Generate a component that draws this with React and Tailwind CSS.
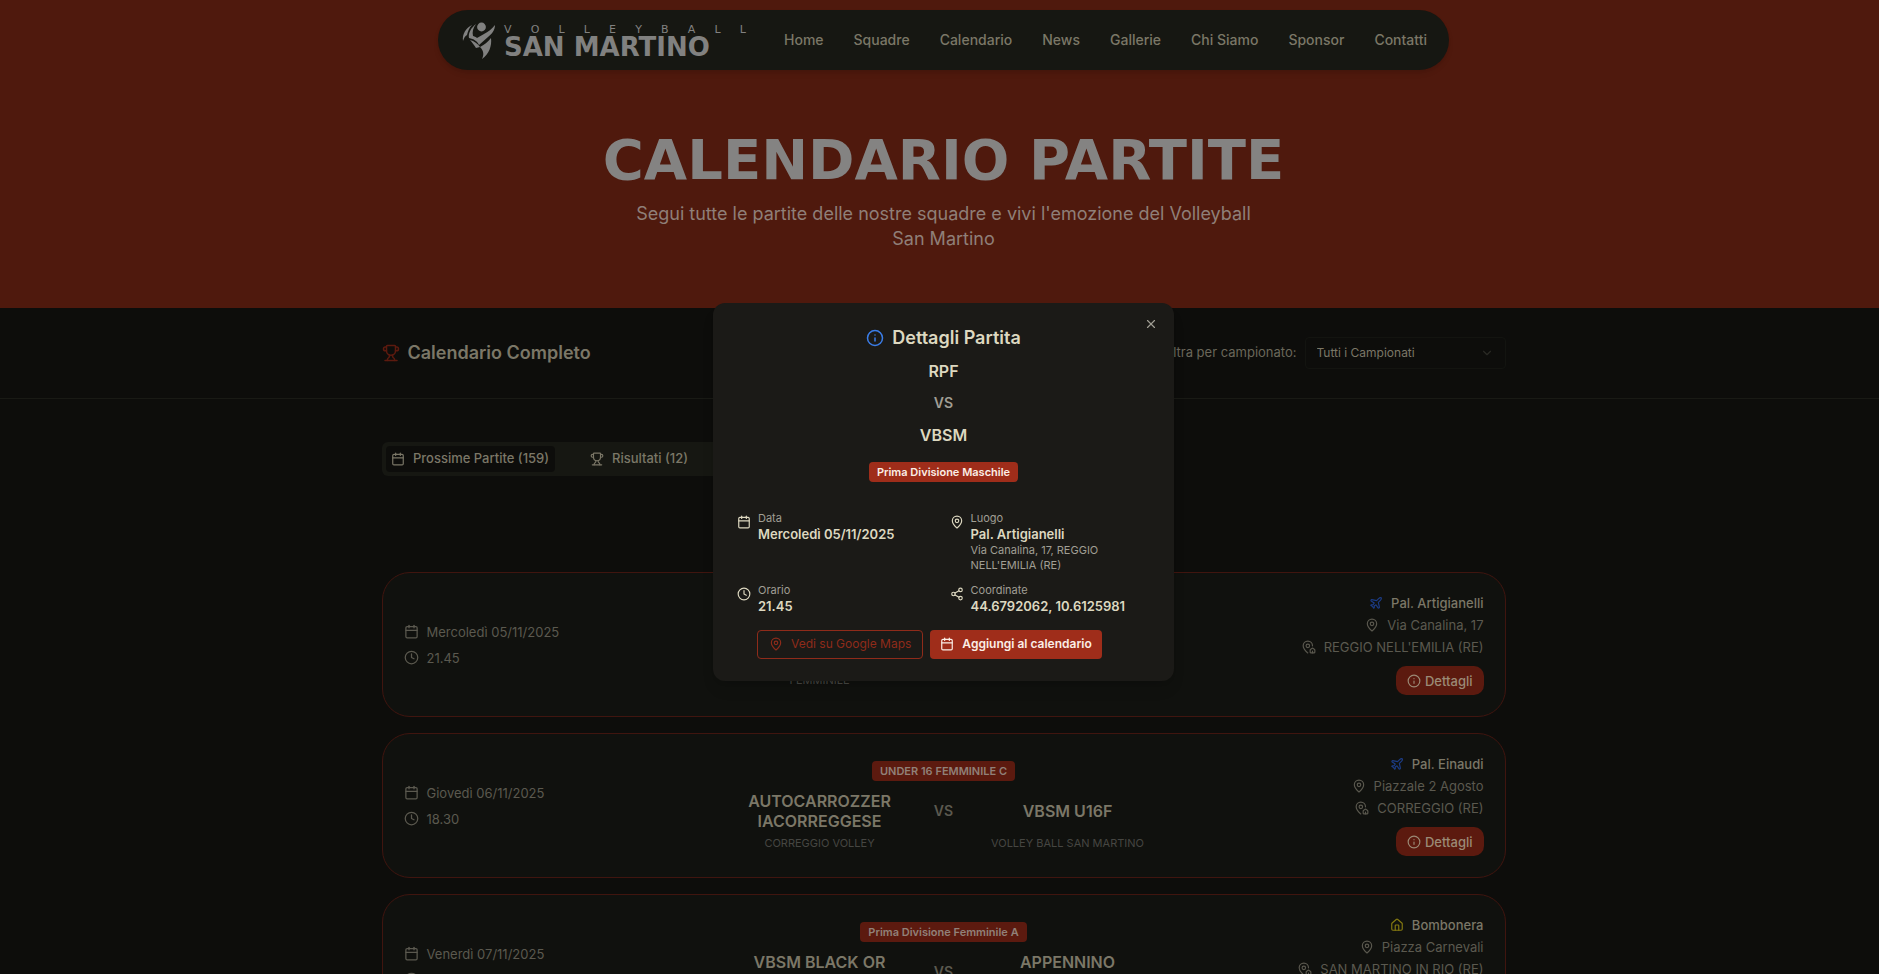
import { useState } from 'react';
import {
  Calendar, ChevronDown, Clock, House, Info,
  MapPin, MapPinHouse, Plane, Share2, Trophy, X
} from 'lucide-react';

const navLinks = ['Home', 'Squadre', 'Calendario', 'News', 'Gallerie', 'Chi Siamo', 'Sponsor', 'Contatti'];

const matches = [
  {
    id: 1,
    date: 'Mercoledì 05/11/2025',
    time: '21.45',
    league: 'Prima Divisione Maschile',
    home: { name: 'RPF', club: 'REGGIO PALLAVOLO FEMMINILE' },
    away: { name: 'VBSM', club: 'VOLLEY BALL SAN MARTINO' },
    venue: 'Pal. Artigianelli',
    street: 'Via Canalina, 17',
    city: "REGGIO NELL'EMILIA (RE)",
    coords: '44.6792062, 10.6125981',
    isHome: false,
  },
  {
    id: 2,
    date: 'Giovedì 06/11/2025',
    time: '18.30',
    league: 'UNDER 16 FEMMINILE C',
    home: { name: 'AUTOCARROZZERIACORREGGESE', club: 'CORREGGIO VOLLEY' },
    away: { name: 'VBSM U16F', club: 'VOLLEY BALL SAN MARTINO' },
    venue: 'Pal. Einaudi',
    street: 'Piazzale 2 Agosto',
    city: 'CORREGGIO (RE)',
    isHome: false,
  },
  {
    id: 3,
    date: 'Venerdì 07/11/2025',
    time: '21.30',
    league: 'Prima Divisione Femminile A',
    home: { name: 'VBSM BLACK OR ANGE', club: 'VOLLEY BALL SAN MARTINO' },
    away: { name: 'APPENNINO VOLLEY', club: 'APPENNINO VOLLEY' },
    venue: 'Bombonera',
    street: 'Piazza Carnevali',
    city: 'SAN MARTINO IN RIO (RE)',
    isHome: true,
  },
];

function Logo() {
  return (
    <a href="#home" aria-label="Volleyball San Martino" className="flex items-center gap-2 text-[#818180]">
      <svg viewBox="0 0 34 38" className="w-[34px] h-[38px]" fill="currentColor">
        <circle cx="19.500" cy="6" r="4.400" />
        <path d="M10 4C4 7 0 13 1 20c1-3 2-5 4-6 1-4 2-7 5-10z" />
        <path d="M14 3c-5 4-8 9-7 14 5 1 8 3 10 7l9-8c4-3 7-7 7-12-3 4-7 7-11 9l-7 4c-1-1-3-2-4-2-1-4 0-8 3-12z" />
        <path d="M8 19c2 2 4 5 6 8l4-1c-2-3-6-6-10-7z" />
        <path d="M18 26c4-2 8-5 11-9 1 8-2 16-9 21 2-4 2-8-2-12z" />
      </svg>
      <span className="flex flex-col w-[242px] pt-1 font-['DejaVu_Sans',sans-serif]">
        <span className="flex justify-between text-[11px] leading-[11px]">
          {[...'VOLLEYBALL'].map((letter, i) => (
            <span key={i}>{letter}</span>
          ))}
        </span>
        <span className="text-[26px] leading-[25px] font-bold whitespace-nowrap">SAN MARTINO</span>
      </span>
    </a>
  );
}

function Navbar() {
  return (
    <header className="flex justify-center pt-[10px]">
      <nav className="flex items-center gap-[38px] h-[60px] pl-6 pr-[22px] rounded-full bg-[#161712] shadow-md">
        <Logo />
        <div className="flex gap-[30px]">
          {navLinks.map((link) => (
            <a key={link} href={`#${link}`} className="text-sm font-medium text-[#7b7767]">{link}</a>
          ))}
        </div>
      </nav>
    </header>
  );
}

function TeamName({ children }) {
  return (
    <div className="px-2 text-center text-base leading-5 font-semibold text-[#7b7767] wrap-anywhere">{children}</div>
  );
}

function ClubName({ children }) {
  return <div className="text-center text-[11px] leading-4 text-[#464642]">{children}</div>;
}

function MatchCard({ match }) {
  const VenueIcon = match.isHome ? House : Plane;

  return (
    <article className="grid grid-cols-[1fr_408px_1fr] items-center p-[21px] rounded-[28px] border border-[#40150f] bg-[#10110e] text-[13px] leading-[18px]">
      {/* Date and time */}
      <div className="flex flex-col gap-2 text-[#5b594f]">
        <div className="flex items-center gap-2">
          <Calendar className="w-[15px] h-[15px]" />
          {match.date}
        </div>
        <div className="flex items-center gap-2">
          <Clock className="w-[15px] h-[15px]" />
          {match.time}
        </div>
      </div>

      {/* Teams */}
      <div className="flex flex-col items-center gap-[10px]">
        <span className="h-5 px-2 rounded bg-[#5c1a0f] text-[11px] leading-5 font-semibold text-[#918078]">{match.league}</span>
        <div className="grid grid-cols-[160px_1fr_160px] items-center gap-y-1 w-full">
          <TeamName>{match.home.name}</TeamName>
          <span className="text-center text-sm font-semibold text-[#5b594f]">VS</span>
          <TeamName>{match.away.name}</TeamName>
          <ClubName>{match.home.club}</ClubName>
          <span />
          <ClubName>{match.away.club}</ClubName>
        </div>
      </div>

      {/* Venue */}
      <div className="flex flex-col items-end">
        <div className="flex flex-col items-end gap-1 text-[#5b594f]">
          <div className="flex items-center gap-2 font-medium text-[#7b7767]">
            <VenueIcon className={`w-[14px] h-[14px] ${match.isHome ? 'text-[#857a10]' : 'text-[#1c3c86]'}`} />
            {match.venue}
          </div>
          <div className="flex items-center gap-2">
            <MapPin className="w-[14px] h-[14px]" />
            {match.street}
          </div>
          <div className="flex items-center gap-2">
            <MapPinHouse className="w-[14px] h-[14px]" />
            {match.city}
          </div>
        </div>
        <button className="flex items-center gap-1 h-[29px] mt-[10px] px-[11px] rounded-[10px] bg-[#5c1a0f] font-medium text-[#9b8a76]">
          <Info className="w-[14px] h-[14px]" />
          Dettagli
        </button>
      </div>
    </article>
  );
}

function Detail({ icon: Icon, label, value, children }) {
  return (
    <div className="flex items-start gap-[7px]">
      <Icon className="w-[14px] h-[14px] mt-1 shrink-0 text-[#ddd8c0]" />
      <div>
        <p className="text-[11px] leading-[14px] text-[#a09e94]">{label}</p>
        <p className="text-[13px] leading-[18px] font-semibold text-[#ddd8c0]">{value}</p>
        {children}
      </div>
    </div>
  );
}

function MatchDialog({ match, onClose }) {
  return (
    <div className="absolute inset-0 flex items-center justify-center pl-2 pt-[9px]">
      <div role="dialog" aria-labelledby="dialog-title" className="relative w-[461px] px-6 py-[22px] rounded-xl bg-[#1b1a17] shadow-lg">
        <button aria-label="Chiudi" onClick={onClose} className="absolute right-4 top-[14px] text-[#a09e94]">
          <X className="w-[14px] h-[14px]" />
        </button>

        <div className="flex flex-col items-center text-[#ddd8c0]">
          <h2 id="dialog-title" className="flex items-center gap-2 text-lg leading-[26px] font-semibold">
            <Info className="w-[18px] h-[18px] text-[#3b7de8]" />
            Dettagli Partita
          </h2>
          <div className="flex flex-col items-center gap-2 mt-2 text-base leading-6 font-semibold">
            <span>{match.home.name}</span>
            <span className="text-sm leading-6 text-[#a09e94]">VS</span>
            <span>{match.away.name}</span>
          </div>
          <span className="h-5 mt-[15px] px-2 rounded bg-[#9f2d1a] text-[11px] leading-5 font-semibold text-[#fbeee6]">{match.league}</span>
        </div>

        <div className="grid grid-cols-2 gap-x-3 gap-y-[10px] mt-[29px]">
          <Detail icon={Calendar} label="Data" value={match.date} />
          <Detail icon={MapPin} label="Luogo" value={match.venue}>
            <p className="text-[11px] leading-[15px] text-[#a09e94]">{match.street}, {match.city}</p>
          </Detail>
          <Detail icon={Clock} label="Orario" value={match.time} />
          <Detail icon={Share2} label="Coordinate" value={match.coords} />
        </div>

        <div className="flex gap-[7px] mt-[15px] pl-5 text-xs">
          <button className="flex items-center gap-2 h-[29px] px-[11px] rounded border border-[#8f2b1a] text-[#8f2b1a]">
            <MapPin className="w-[14px] h-[14px]" />
            Vedi su Google Maps
          </button>
          <button className="flex items-center gap-2 h-[29px] px-[10px] rounded bg-[#9f2d1a] font-semibold text-[#fbeee6]">
            <Calendar className="w-[14px] h-[14px]" />
            Aggiungi al calendario
          </button>
        </div>
      </div>
    </div>
  );
}

export default function App() {
  const [selected, setSelected] = useState(matches[0]);

  return (
    <div className="relative h-screen overflow-hidden bg-[#0d0d0b] font-['Inter',sans-serif]">
      {/* Hero */}
      <div className="pl-2 pb-[57px] bg-[#4f190d]">
        <Navbar />
        <div className="pt-[62px] text-center text-[#848382]">
          <h1 className="text-[56px] leading-[56px] font-bold font-['DejaVu_Sans',sans-serif]">CALENDARIO PARTITE</h1>
          <p className="max-w-[640px] mx-auto mt-[13px] text-lg leading-[25px] text-[#8f7f78]">
            Segui tutte le partite delle nostre squadre e vivi l'emozione del Volleyball San Martino
          </p>
        </div>
      </div>

      {/* Filter bar */}
      <div className="pl-2 border-b border-[#191a15]">
        <div className="flex items-center justify-between max-w-[1124px] h-[90px] mx-auto">
          <h2 className="flex items-center gap-2 text-lg font-semibold text-[#7b7767]">
            <Trophy className="w-[18px] h-[18px] text-[#5c1a0f]" />
            Calendario Completo
          </h2>
          <div className="flex items-center gap-2">
            <label htmlFor="league" className="text-[13px] text-[#6a675a]">Filtra per campionato:</label>
            <div className="relative">
              <select id="league" className="appearance-none w-[201px] h-8 px-[11px] rounded border border-[#131410] bg-[#0d0d0b] text-xs text-[#7b7767]">
                <option>Tutti i Campionati</option>
              </select>
              <ChevronDown className="absolute right-3 top-[9px] w-[14px] h-[14px] text-[#2a2a25] pointer-events-none" />
            </div>
          </div>
        </div>
      </div>

      <main className="pl-2">
        <div className="max-w-[1124px] mx-auto pt-[43px]">
          {/* Tabs */}
          <div role="tablist" className="grid grid-cols-2 w-[346px] p-1 rounded-md bg-[#161712] text-[13px] font-medium text-[#7b7767]">
            <button role="tab" aria-selected="true" className="flex items-center justify-center gap-2 h-[26px] rounded bg-[#0d0d0b]">
              <Calendar className="w-[14px] h-[14px]" />
              Prossime Partite (159)
            </button>
            <button role="tab" aria-selected="false" className="flex items-center justify-center gap-2 h-[26px]">
              <Trophy className="w-[14px] h-[14px]" />
              Risultati (12)
            </button>
          </div>

          {/* Match list */}
          <div className="flex flex-col gap-4 mt-24">
            {matches.map((match) => (
              <MatchCard key={match.id} match={match} />
            ))}
          </div>
        </div>
      </main>

      {selected && <MatchDialog match={selected} onClose={() => setSelected(null)} />}
    </div>
  );
}
